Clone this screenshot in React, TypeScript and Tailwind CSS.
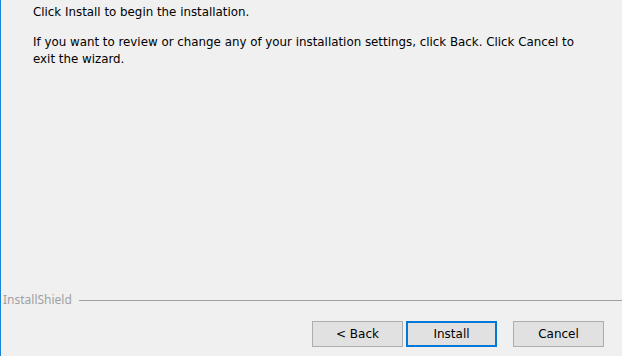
import React from 'react';

const WizButton = ({ label, primary }: { label: string; primary?: boolean }) => (
  <button
    className={
      primary
        ? 'w-[91px] h-[26px] bg-[#e1e1e1] border-2 border-[#0078d7] text-[12px] text-black leading-none'
        : 'w-[91px] h-[26px] bg-[#e1e1e1] border border-[#adadad] text-[12px] text-black leading-none'
    }
  >
    {label}
  </button>
);

export default function App() {
  return (
    <div
      className="w-[622px] h-[356px] bg-[#f0f0f0] border-l border-[#1883d7] flex flex-col overflow-hidden"
      style={{ fontFamily: '"DejaVu Sans", "Noto Sans", sans-serif' }}
    >
      <div className="flex-1 pl-[32px] pr-[24px] pt-[4px] text-[11.85px] leading-[17px] text-black">
        <p>Click Install to begin the installation.</p>
        <p className="mt-[13px]">
          If you want to review or change any of your installation settings, click Back. Click Cancel to exit the
          wizard.
        </p>
      </div>

      <div className="flex items-center h-[14px] mb-[14px]">
        <span className="pl-[2px] text-[12px] text-[#a0a0a0]" style={{ fontFamily: '"Noto Sans", sans-serif' }}>
          InstallShield
        </span>
        <div className="flex-1 ml-[7px] h-px bg-[#a0a0a0]" />
      </div>

      <div className="flex justify-end items-center pr-[18px] pb-[9px]">
        <WizButton label="< Back" />
        <div className="w-[3px]" />
        <WizButton label="Install" primary />
        <div className="w-[16px]" />
        <WizButton label="Cancel" />
      </div>
    </div>
  );
}
